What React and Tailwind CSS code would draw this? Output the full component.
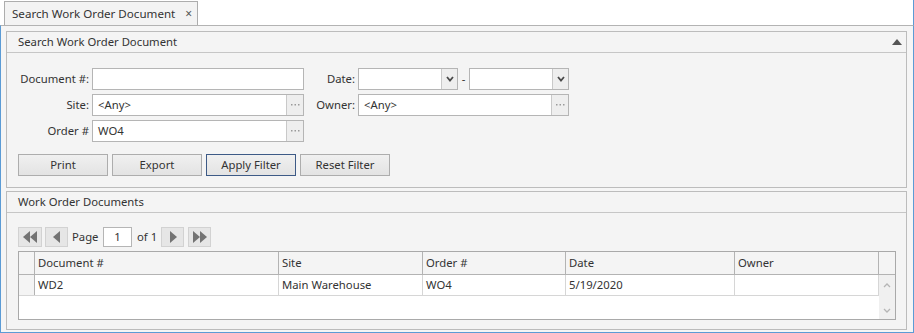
import React from "react";

const font = { fontFamily: '"Noto Sans", "Open Sans", sans-serif' };

const Ellipsis = () => (
    <div className="w-[17px] h-[20px] my-[0px] border-l border-[#c9c9c9] bg-[#eeeeee] flex items-center justify-center">
        <svg width="9" height="2" viewBox="0 0 9 2">
            <rect x="0" y="0" width="1.5" height="1.5" fill="#9a9a9a" />
            <rect x="3.5" y="0" width="1.5" height="1.5" fill="#9a9a9a" />
            <rect x="7" y="0" width="1.5" height="1.5" fill="#9a9a9a" />
        </svg>
    </div>
);

const Chevron = () => (
    <div className="w-[16px] h-[20px] border-l border-[#c9c9c9] bg-[#eeeeee] flex items-center justify-center">
        <svg width="8" height="6" viewBox="0 0 8 6">
            <path d="M1 1 L4 4.5 L7 1" stroke="#4a4a4a" strokeWidth="1.8" fill="none" />
        </svg>
    </div>
);

const TextBox = ({ width, value, lookup }) => (
    <div className={`${width} h-[22px] border border-[#b5b5b5] bg-white flex items-center`}>
        <span className="flex-1 pl-[5px] text-[#333]">{value}</span>
        {lookup && <Ellipsis />}
    </div>
);

const DateBox = () => (
    <div className="w-[100px] h-[22px] border border-[#b5b5b5] bg-white flex items-center justify-end">
        <Chevron />
    </div>
);

const Button = ({ label, focused }) => (
    <button
        className={`w-[90px] h-[22px] border ${focused ? "border-[#3d5a86]" : "border-[#adadad]"} bg-gradient-to-b from-[#f0f0f0] to-[#e3e3e3] text-[#333] flex items-center justify-center`}
    >
        {label}
    </button>
);

const PanelHeader = ({ title, collapse }) => (
    <div className="h-[21px] border-b border-[#c6c6c6] flex items-center justify-between pl-[11px] pr-[4px] text-[#333]">
        <span>{title}</span>
        {collapse && (
            <svg width="10" height="6" viewBox="0 0 10 6">
                <polygon points="0,6 5,0 10,6" fill="#555" />
            </svg>
        )}
    </div>
);

const PagerButton = ({ dir, double, width }) => (
    <div className={`${width} h-[20px] border border-[#d2d2d2] bg-[#e6e6e6] flex items-center justify-center`}>
        <svg width={double ? 16 : 8} height="12" viewBox={double ? "0 0 16 12" : "0 0 8 12"}>
            {dir === "left" ? (
                double ? (
                    <>
                        <polygon points="8,0 1,6 8,12" fill="#737373" />
                        <polygon points="15,0 8,6 15,12" fill="#737373" />
                    </>
                ) : (
                    <polygon points="7,0 0,6 7,12" fill="#737373" />
                )
            ) : double ? (
                <>
                    <polygon points="1,0 8,6 1,12" fill="#737373" />
                    <polygon points="8,0 15,6 8,12" fill="#737373" />
                </>
            ) : (
                <polygon points="1,0 8,6 1,12" fill="#737373" />
            )}
        </svg>
    </div>
);

const columns = [
    { title: "Document #", width: "w-[244px]", value: "WD2" },
    { title: "Site", width: "w-[144px]", value: "Main Warehouse" },
    { title: "Order #", width: "w-[143px]", value: "WO4" },
    { title: "Date", width: "w-[169px]", value: "5/19/2020" },
    { title: "Owner", width: "w-[144px]", value: "" },
];

const App = () => {
    return (
        <div className="w-[914px] h-[333px] bg-white overflow-hidden text-[11.3px] leading-none" style={font}>
            {/* tab strip */}
            <div className="h-[25px] flex items-end pl-[4px] border-r border-[#5b9bd5]">
                <div className="w-[194px] h-[24px] border border-b-0 border-[#adadad] bg-[#f3f3f3] flex items-center pl-[7px] text-[#333]">
                    <span className="text-[11.6px]">Search Work Order Document</span>
                    <span className="ml-[10px] text-[12px] text-[#555]">×</span>
                </div>
            </div>

            {/* content frame */}
            <div className="h-[308px] border-t border-t-[#b3b3b3] border-l border-r border-b border-[#5b9bd5] bg-[#f5f5f5] pt-[5px] pl-[5px] pr-[6px] flex flex-col gap-[3px]">
                {/* search panel */}
                <div className="h-[157px] border border-[#bcbcbc] bg-[#f4f4f4] flex flex-col">
                    <PanelHeader title="Search Work Order Document" collapse />
                    <div className="pt-[15px] pl-[11px] flex flex-col gap-[4px]">
                        <div className="flex items-center">
                            <label className="w-[71px] mr-[3px] text-right text-[#333]">Document #:</label>
                            <TextBox width="w-[212px]" value="" />
                            <label className="w-[51px] mr-[3px] text-right text-[#333]">Date:</label>
                            <DateBox />
                            <span className="w-[11px] text-center text-[#333]">-</span>
                            <DateBox />
                        </div>
                        <div className="flex items-center">
                            <label className="w-[71px] mr-[3px] text-right text-[#333]">Site:</label>
                            <TextBox width="w-[212px]" value="<Any>" lookup />
                            <label className="w-[51px] mr-[3px] text-right text-[#333]">Owner:</label>
                            <TextBox width="w-[211px]" value="<Any>" lookup />
                        </div>
                        <div className="flex items-center">
                            <label className="w-[71px] mr-[3px] text-right text-[#333]">Order #</label>
                            <TextBox width="w-[212px]" value="WO4" lookup />
                        </div>
                    </div>
                    <div className="mt-[12px] pl-[11px] flex gap-[4px]">
                        <Button label="Print" />
                        <Button label="Export" />
                        <Button label="Apply Filter" focused />
                        <Button label="Reset Filter" />
                    </div>
                </div>

                {/* results panel */}
                <div className="h-[139px] border border-[#bcbcbc] bg-[#f4f4f4] flex flex-col">
                    <PanelHeader title="Work Order Documents" />
                    <div className="pt-[14px] pl-[11px] flex items-center text-[#333]">
                        <PagerButton dir="left" double width="w-[24px]" />
                        <div className="ml-[3px]">
                            <PagerButton dir="left" width="w-[23px]" />
                        </div>
                        <span className="w-[35px] pl-[4px]">Page</span>
                        <div className="w-[29px] h-[20px] border border-[#b5b5b5] bg-white flex items-center justify-center">1</div>
                        <span className="w-[29px] pl-[5px]">of 1</span>
                        <PagerButton dir="right" width="w-[23px]" />
                        <div className="ml-[4px]">
                            <PagerButton dir="right" double width="w-[23px]" />
                        </div>
                    </div>

                    {/* grid */}
                    <div className="mt-[4px] ml-[11px] w-[878px] h-[69px] border border-[#a9a9a9] bg-white flex flex-col">
                        <div className="h-[23px] flex bg-[#f4f4f4] border-b border-[#b3b3b3]">
                            <div className="w-[16px] border-r border-[#b3b3b3]" />
                            {columns.map((c) => (
                                <div key={c.title} className={`${c.width} border-r border-[#b3b3b3] pl-[3px] flex items-center text-[#333]`}>
                                    {c.title}
                                </div>
                            ))}
                            <div className="w-[16px]" />
                        </div>
                        <div className="flex-1 flex">
                            <div className="flex-1 flex flex-col">
                                <div className="h-[21px] flex border-b border-[#d6d6d6]">
                                    <div className="w-[16px] border-r border-[#b3b3b3] bg-[#f4f4f4]" />
                                    {columns.map((c) => (
                                        <div key={c.title} className={`${c.width} border-r border-[#d6d6d6] pl-[3px] flex items-center text-[#333]`}>
                                            {c.value}
                                        </div>
                                    ))}
                                </div>
                            </div>
                            <div className="w-[16px] bg-[#f0f0f0] flex flex-col items-center justify-between pt-[8px] pb-[6px]">
                                <svg width="8" height="5" viewBox="0 0 8 5">
                                    <path d="M1 4 L4 1 L7 4" stroke="#b5b5b5" strokeWidth="1.3" fill="none" />
                                </svg>
                                <svg width="8" height="5" viewBox="0 0 8 5">
                                    <path d="M1 1 L4 4 L7 1" stroke="#b5b5b5" strokeWidth="1.3" fill="none" />
                                </svg>
                            </div>
                        </div>
                    </div>
                </div>
            </div>
        </div>
    );
};

export default App;
